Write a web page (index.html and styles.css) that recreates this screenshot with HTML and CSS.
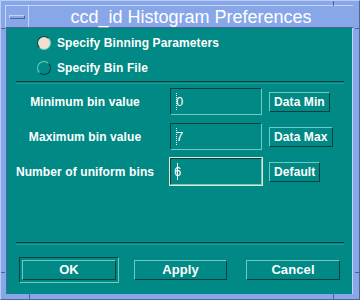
FILE: index.html
```html
<!DOCTYPE html>
<html lang="en">
<head>
    <meta charset="UTF-8">
    <title>ccd_id Histogram Preferences</title>
    <link rel="stylesheet" href="styles.css">
</head>
<body>
    <div class="window">
        <!-- resize handle ticks on the frame -->
        <span class="tick tick-h" style="left:0;top:27px"></span>
        <span class="tick tick-h" style="left:0;top:271px"></span>
        <span class="tick tick-h" style="right:0;top:27px"></span>
        <span class="tick tick-h" style="right:0;top:271px"></span>
        <span class="tick tick-v" style="left:28px;bottom:0"></span>
        <span class="tick tick-v" style="left:332px;bottom:0"></span>
        <span class="tick tick-v" style="left:332px;top:0"></span>

        <div class="titlebar">
            <div class="menu-btn"><span class="menu-bar"></span></div>
            <div class="title">ccd_id Histogram Preferences</div>
        </div>

        <div class="dialog">
            <div class="radios">
                <label class="radio checked"><span class="dot"></span>Specify Binning Parameters</label>
                <label class="radio"><span class="dot"></span>Specify Bin File</label>
            </div>

            <div class="sep"></div>

            <div class="form">
                <div class="row">
                    <span class="label">Minimum bin value</span>
                    <div class="field"><div class="field-inner"><span class="cursor"></span>0</div></div>
                    <button class="btn">Data Min</button>
                </div>
                <div class="row">
                    <span class="label">Maximum bin value</span>
                    <div class="field"><div class="field-inner"><span class="cursor"></span>7</div></div>
                    <button class="btn">Data Max</button>
                </div>
                <div class="row">
                    <span class="label">Number of uniform bins</span>
                    <div class="field focused"><div class="field-inner">6<span class="cursor solid"></span></div></div>
                    <button class="btn">Default</button>
                </div>
            </div>

            <div class="sep bottom"></div>

            <div class="actions">
                <div class="default-frame"><button class="btn wide">OK</button></div>
                <button class="btn wide apply">Apply</button>
                <button class="btn wide cancel">Cancel</button>
            </div>
        </div>
    </div>
</body>
</html>
```

FILE: styles.css
```css
/* Motif style dialog */
body {
    margin: 0;
    font-family: "Liberation Sans", Arial, sans-serif;
    background-color: #87a7e9;
}

.window {
    position: relative;
    width: 360px;
    height: 300px;
    box-sizing: border-box;
    padding: 5px 6px 5px 5px;
    display: flex;
    flex-direction: column;
    background-color: #87a7e9;
    border-top: 1px solid #b9cdf6;
    border-left: 1px solid #b9cdf6;
    border-right: 1px solid #4d6496;
    border-bottom: 1px solid #4d6496;
}

.tick {
    position: absolute;
    background-color: #4d6496;
}
.tick-h {
    width: 4px;
    height: 1px;
}
.tick-v {
    width: 1px;
    height: 5px;
}

.titlebar {
    display: flex;
    height: 23px;
    box-sizing: border-box;
    margin: -1px 0 0 -1px;
    border-top: 1px solid #c3d5fb;
    border-left: 1px solid #c3d5fb;
    border-bottom: 1px solid #4d6496;
}

.menu-btn {
    width: 22px;
    display: flex;
    align-items: center;
    justify-content: center;
    border-right: 1px solid #c3d5fb;
}

.menu-bar {
    width: 14px;
    height: 2px;
    border-top: 1px solid #c3d5fb;
    border-left: 1px solid #c3d5fb;
    border-bottom: 1px solid #4d6496;
    border-right: 1px solid #4d6496;
}

.title {
    flex: 1;
    text-align: center;
    color: #fff;
    font-size: 18px;
    line-height: 22px;
}

.dialog {
    flex: 1;
    display: flex;
    flex-direction: column;
    background-color: #008985;
    color: #fff;
    font-weight: bold;
    font-size: 12px;
    letter-spacing: 0.1px;
    border-left: 1px solid #4d6496;
    border-right: 1px solid #c3d5fb;
}

.radios {
    padding: 2px 0 0 30px;
}

.radio {
    display: flex;
    align-items: center;
    height: 25px;
}

.dot {
    width: 12px;
    height: 12px;
    border-radius: 50%;
    margin-right: 6px;
    border: 1px solid;
    border-color: #6fcac5 #073f3d #073f3d #6fcac5;
}
.radio.checked .dot {
    background-color: #f1e0cf;
    border-color: #073f3d #6fcac5 #6fcac5 #073f3d;
}

.sep {
    margin: 1px 8px 0 9px;
    height: 1px;
    border-top: 1px solid #073f3d;
    border-bottom: 1px solid #1f9d98;
}
.sep.bottom {
    margin-top: 2px;
}

.form {
    flex: 1;
    padding-top: 3px;
    display: flex;
    flex-direction: column;
    gap: 6px;
}

.row {
    display: flex;
    align-items: center;
    padding-left: 7px;
}

.label {
    width: 142px;
    margin-right: 13px;
    text-align: center;
}

.field {
    width: 94px;
    height: 29px;
    box-sizing: border-box;
    border: 1px solid transparent;
    margin-right: 6px;
}
.field.focused {
    border-color: #f1e0cf;
}

.field-inner {
    height: 100%;
    box-sizing: border-box;
    border: 1px solid;
    border-color: #073f3d #6fcac5 #6fcac5 #073f3d;
    padding-left: 3px;
    font-weight: normal;
    font-size: 13px;
    display: flex;
    align-items: center;
}

.cursor {
    display: inline-block;
    width: 0;
    height: 17px;
    border-left: 1px dotted #fff;
    margin-left: 2px;
    margin-right: -1px;
}
.cursor.solid {
    border-left-style: solid;
    margin-left: -4px;
}

.btn {
    font-family: inherit;
    font-weight: bold;
    font-size: 12px;
    letter-spacing: 0.1px;
    color: #fff;
    background-color: #008985;
    height: 20px;
    padding: 0 4px;
    border: 1px solid;
    border-color: #6fcac5 #073f3d #073f3d #6fcac5;
    line-height: 16px;
}

.actions {
    display: flex;
    align-items: center;
    height: 49px;
    padding-left: 12px;
}

.default-frame {
    padding: 2px;
    border: 1px solid;
    border-color: #073f3d #6fcac5 #6fcac5 #073f3d;
}

.btn.wide {
    width: 94px;
    font-size: 13px;
}
.btn.apply {
    width: 93px;
    margin-left: 15px;
}
.btn.cancel {
    margin-left: 19px;
}
```
